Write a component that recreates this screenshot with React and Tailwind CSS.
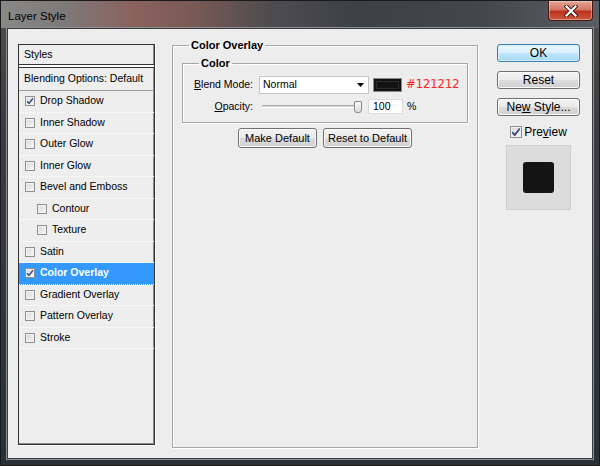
import React from "react";

const font = { fontFamily: '"Liberation Sans", Arial, sans-serif' };

const Check = ({ checked, size = 10 }) => (
  <span
    className="inline-flex shrink-0 items-center justify-center border border-[#8e8f8f] bg-[linear-gradient(135deg,#d8d8d8_0%,#f6f6f6_100%)] shadow-[inset_0_0_0_1px_#f4f4f4]"
    style={{ width: size, height: size }}
  >
    {checked && (
      <svg width={size - 2} height={size - 2} viewBox="0 0 8 8">
        <path d="M1 4.2 L3 6.4 L7 1.2" fill="none" stroke="#3b4f85" strokeWidth="1.5" />
      </svg>
    )}
  </span>
);

const items = [
  { label: "Drop Shadow", checked: true },
  { label: "Inner Shadow" },
  { label: "Outer Glow" },
  { label: "Inner Glow" },
  { label: "Bevel and Emboss" },
  { label: "Contour", indent: true },
  { label: "Texture", indent: true },
  { label: "Satin" },
  { label: "Color Overlay", checked: true, active: true },
  { label: "Gradient Overlay" },
  { label: "Pattern Overlay" },
  { label: "Stroke" },
];

const WinButton = ({ children, primary, className = "" }) => (
  <button
    className={`flex items-center justify-center rounded-[3px] border text-[11px] text-black ${
      primary
        ? "border-[#3c7fb1] bg-[linear-gradient(#eaf6fd_0%,#d9f0fc_50%,#bee6fd_50%,#a7d9f5_100%)] shadow-[inset_0_0_0_1px_#d6ecf9]"
        : "border-[#707070] bg-[linear-gradient(#f2f2f2_0%,#ebebeb_50%,#dddddd_50%,#cfcfcf_100%)] shadow-[inset_0_0_0_1px_#fbfbfb]"
    } ${className}`}
  >
    {children}
  </button>
);

const App = () => {
  return (
    <div
      className="relative flex h-[466px] w-[600px] flex-col overflow-hidden border border-[#1a1a1a] bg-[linear-gradient(180deg,#55504f_0%,#3a3d42_25%,#2a3038_100%)]"
      style={font}
    >
      {/* title bar */}
      <div className="flex h-[27px] shrink-0 items-start justify-between bg-[linear-gradient(90deg,#8a8887_0%,#7d7a7a_10%,#8a625d_22%,#7a5955_32%,#4e4c50_45%,#3c4047_60%,#42464d_80%,#5a5e64_100%)] pl-[7px] pr-[6px]">
        <span className="mt-[7px] text-[11.5px] text-black">Layer Style</span>
        <div className="flex h-[20px] w-[45px] items-center justify-center rounded-b-[4px] border border-t-0 border-[#4a1a15] bg-[linear-gradient(#e6a796_0%,#d27664_45%,#b8321f_55%,#cf5a3c_100%)] shadow-[inset_0_0_0_1px_rgba(255,255,255,0.35)]">
          <svg width="14" height="12" viewBox="0 0 14 12">
            <path d="M2.5 1.5 L11.5 10.5 M11.5 1.5 L2.5 10.5" stroke="#3a1410" strokeWidth="4" strokeLinecap="square" />
            <path d="M2.5 1.5 L11.5 10.5 M11.5 1.5 L2.5 10.5" stroke="#ffffff" strokeWidth="2.2" strokeLinecap="square" />
          </svg>
        </div>
      </div>

      {/* client area */}
      <div className="mx-[6px] mb-[6px] flex flex-1 items-start border border-[#3a3a3a] bg-[#ededed] pl-[10px] pt-[15px] shadow-[0_0_0_1px_#8c9096]">
        {/* styles list */}
        <div className="flex h-[401px] w-[137px] shrink-0 flex-col border border-[#333] bg-[#eeeeee] text-[10.5px] text-black shadow-[1px_1px_0_#fff,inset_-1px_-1px_0_#8a8a8a]">
          <div className="flex h-[20px] items-center border-b border-[#333] pl-[5px]">Styles</div>
          <div className="h-[2px] bg-white" />
          <div className="flex h-[24px] items-center border-y border-[#333] border-b-[#9c9c9c] pl-[5px]">
            Blending Options: Default
          </div>
          {items.map((it) => (
            <div
              key={it.label}
              className={`flex h-[21.5px] items-center gap-[5px] border-b border-dotted border-white ${
                it.indent ? "pl-[18px]" : "pl-[6px]"
              } ${it.active ? "bg-[#3399ff] font-bold text-white" : ""}`}
            >
              <Check checked={it.checked} />
              <span>{it.label}</span>
            </div>
          ))}
        </div>

        {/* Color Overlay group */}
        <fieldset className="ml-[17px] -mt-[5px] h-[409px] w-[306px] shrink-0 border border-[#a6a6a6] px-[9px] shadow-[inset_1px_1px_0_#fff,1px_1px_0_#fff]">
          <legend className="ml-[7px] px-[2px] text-[11px] font-bold leading-[13px] text-black">Color Overlay</legend>

          <fieldset className="mt-[5px] border border-[#a6a6a6] pb-[8px] shadow-[inset_1px_1px_0_#fff,1px_1px_0_#fff]">
            <legend className="ml-[16px] px-[2px] text-[11px] font-bold leading-[13px] text-black">Color</legend>

            <div className="mt-[6px] flex h-[18px] items-center text-[10.5px] text-black">
              <span className="w-[70px] text-right">
                <u>B</u>lend Mode:
              </span>
              <div className="ml-[6px] flex h-[18px] w-[110px] items-center justify-between border border-[#c6c6c6] bg-white pl-[3px] pr-[4px]">
                <span>Normal</span>
                <svg width="7" height="4" viewBox="0 0 7 4">
                  <path d="M0 0 H7 L3.5 4 Z" fill="#000" />
                </svg>
              </div>
              <div className="ml-[4px] h-[14px] w-[29px] border border-[#8a8a8a] bg-[#121212] shadow-[inset_0_0_0_2px_#121212,inset_0_0_0_3px_#2a2a2a]" />
              <span
                className="ml-[4px] text-[11.5px] text-[#ff2222]"
                style={{ fontFamily: '"DejaVu Sans", Verdana, sans-serif' }}
              >
                #121212
              </span>
            </div>

            <div className="mt-[5px] flex h-[15px] items-center text-[10.5px] text-black">
              <span className="w-[70px] text-right">
                <u>O</u>pacity:
              </span>
              <div className="relative ml-[9px] flex h-[14px] w-[100px] items-center">
                <div className="h-[3px] w-full rounded-[1px] border-t border-[#a8a8a8] border-b border-b-white bg-[#d8d8d8]" />
                <div className="absolute right-0 top-[1px] h-[12px] w-[8px] rounded-b-[3px] rounded-t-[1px] border border-[#8a8a8a] bg-[linear-gradient(#fafafa,#dadada)]" />
              </div>
              <div className="ml-[6px] flex h-[15px] w-[35px] items-center border border-[#dcdcdc] bg-white pl-[4px]">100</div>
              <span className="ml-[4px]">%</span>
            </div>
          </fieldset>

          <div className="mt-[5px] flex justify-center gap-[6px]">
            <WinButton className="h-[20px] w-[79px]">Make Default</WinButton>
            <WinButton className="h-[20px] w-[89px]">Reset to Default</WinButton>
          </div>
        </fieldset>

        {/* right buttons */}
        <div className="ml-[19px] flex w-[83px] shrink-0 flex-col items-center">
          <WinButton primary className="h-[18px] w-[83px] text-[12px]">
            OK
          </WinButton>
          <WinButton className="mt-[9px] h-[18px] w-[83px] text-[12px]">Reset</WinButton>
          <WinButton className="mt-[9px] h-[18px] w-[83px] text-[12px]">
            Ne<u>w</u>&nbsp;Style...
          </WinButton>
          <div className="mt-[9px] flex h-[13px] items-center gap-[2px] text-[12px] text-black">
            <Check checked size={12} />
            <span>
              Pre<u>v</u>iew
            </span>
          </div>
          <div className="mt-[7px] flex h-[65px] w-[65px] items-center justify-center border border-[#cfcfcf] bg-[#dcdcdc]">
            <div className="h-[31px] w-[31px] rounded-[3px] bg-[#141414]" />
          </div>
        </div>
      </div>
    </div>
  );
};

export default App;
